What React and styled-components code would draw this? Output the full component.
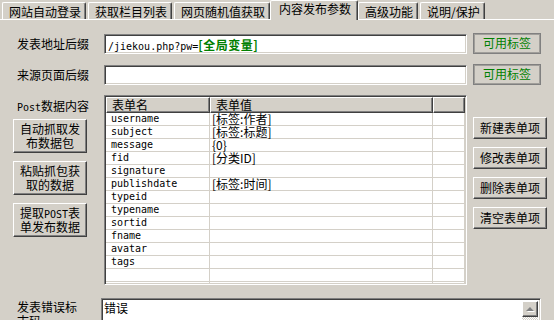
import React from "react";
import styled, { createGlobalStyle } from "styled-components";

const GlobalStyle = createGlobalStyle`
    html, body {
        margin: 0;
        padding: 0;
        background: #d4d0c8;
        overflow: hidden;
    }
    body {
        font-family: "Noto Sans CJK SC", "DejaVu Sans", sans-serif;
        font-size: 12px;
        color: #000;
    }
`;

const tabs = ["网站自动登录", "获取栏目列表", "网页随机值获取", "内容发布参数", "高级功能", "说明/保护"];

const fields = [
    ["username", "[标签:作者]"],
    ["subject", "[标签:标题]"],
    ["message", "{0}"],
    ["fid", "[分类ID]"],
    ["signature", ""],
    ["publishdate", "[标签:时间]"],
    ["typeid", ""],
    ["typename", ""],
    ["sortid", ""],
    ["fname", ""],
    ["avatar", ""],
    ["tags", ""],
    ["", ""],
    ["", ""],
];

export default function App() {
    return (
        <Window>
            <GlobalStyle />
            <TabBar>
                {tabs.map((t, i) => (
                    <Tab key={t} $active={i === 3}>
                        {t}
                    </Tab>
                ))}
            </TabBar>
            <Panel>
                <FieldRow>
                    <Label>发表地址后缀</Label>
                    <TextInput>
                        <Mono>/jiekou.php?pw=</Mono>
                        <Var>[全局变量]</Var>
                    </TextInput>
                    <TagButton>可用标签</TagButton>
                </FieldRow>
                <FieldRow>
                    <Label>来源页面后缀</Label>
                    <TextInput />
                    <TagButton>可用标签</TagButton>
                </FieldRow>

                <Section>
                    <LeftCol>
                        <SideLabel>
                            <Mono>Post</Mono>数据内容
                        </SideLabel>
                        <TallButton>
                            <Line>自动抓取发</Line>
                            <Line>布数据包</Line>
                        </TallButton>
                        <TallButton>
                            <Line>粘贴抓包获</Line>
                            <Line>取的数据</Line>
                        </TallButton>
                        <TallButton>
                            <Line>
                                提取<Mono>POST</Mono>表
                            </Line>
                            <Line>单发布数据</Line>
                        </TallButton>
                    </LeftCol>

                    <ListView>
                        <HeaderRow>
                            <HeaderCell>表单名</HeaderCell>
                            <HeaderCell>表单值</HeaderCell>
                            <HeaderCell />
                        </HeaderRow>
                        {fields.map(([name, value], i) => (
                            <Row key={i}>
                                <NameCell>{name}</NameCell>
                                <ValueCell>{value}</ValueCell>
                                <ValueCell />
                            </Row>
                        ))}
                    </ListView>

                    <RightCol>
                        <ActionButton>新建表单项</ActionButton>
                        <ActionButton>修改表单项</ActionButton>
                        <ActionButton>删除表单项</ActionButton>
                        <ActionButton>清空表单项</ActionButton>
                    </RightCol>
                </Section>

                <BottomRow>
                    <BottomLabel>
                        <Line>发表错误标</Line>
                        <Line>志码</Line>
                    </BottomLabel>
                    <TextBox>
                        <BoxText>错误</BoxText>
                        <ScrollBar>
                            <ArrowButton>
                                <Triangle />
                            </ArrowButton>
                            <Track />
                        </ScrollBar>
                    </TextBox>
                </BottomRow>
            </Panel>
        </Window>
    );
}

const Window = styled.div`
    width: 554px;
    height: 320px;
    overflow: hidden;
    background: #d4d0c8;
`;

const TabBar = styled.div`
    display: flex;
    align-items: flex-end;
    height: 19px;
    padding-left: 2px;
    position: relative;
    z-index: 1;
`;

const Tab = styled.div`
    box-sizing: border-box;
    height: ${(p) => (p.$active ? "20px" : "17px")};
    margin: ${(p) => (p.$active ? "0 0 -1px -2px" : "0 2px 0 0")};
    padding: ${(p) => (p.$active ? "1px 6px 0 8px" : "2px 4px 0 6px")};
    background: #d4d0c8;
    border-top: 1px solid #fff;
    border-left: 1px solid #fff;
    border-right: 1px solid #404040;
    border-radius: 2px 2px 0 0;
    box-shadow: inset -1px 0 #808080;
    line-height: 14px;
    white-space: nowrap;
`;

const Panel = styled.div`
    border-top: 1px solid #fff;
    padding: 13px 0 0 13px;
`;

const FieldRow = styled.div`
    display: flex;
    align-items: center;
    height: 21px;
    margin-bottom: 10px;
`;

const Label = styled.div`
    box-sizing: border-box;
    width: 91px;
    padding-left: 4px;
    line-height: 14px;
`;

const sunken = `
    box-sizing: border-box;
    background: #fff;
    border-style: solid;
    border-width: 1px;
    border-color: #808080 #fff #fff #808080;
    box-shadow: inset 1px 1px #404040, inset -1px -1px #d4d0c8;
`;

const raised = `
    box-sizing: border-box;
    background: #d4d0c8;
    border-style: solid;
    border-width: 1px;
    border-color: #fff #404040 #404040 #fff;
    box-shadow: inset -1px -1px #808080;
`;

const TextInput = styled.div`
    ${sunken}
    width: 363px;
    height: 20px;
    padding: 2px 3px;
    line-height: 15px;
    white-space: nowrap;
    overflow: hidden;
`;

const Mono = styled.span`
    font-family: "DejaVu Sans Mono", "Liberation Mono", monospace;
    font-size: 10px;
`;

const Var = styled.span`
    color: #008000;
    font-weight: bold;
    letter-spacing: 0.5px;
`;

const Line = styled.div`
    height: 14px;
    line-height: 14px;
    white-space: nowrap;
`;

const TagButton = styled.div`
    box-sizing: border-box;
    width: 68px;
    height: 21px;
    margin-left: 6px;
    border: 1px solid #808080;
    box-shadow: inset 0 0 0 1px #a09e9a;
    color: #008000;
    text-align: center;
    line-height: 18px;
`;

const Section = styled.div`
    display: flex;
    align-items: flex-start;
`;

const LeftCol = styled.div`
    display: flex;
    flex-direction: column;
    width: 91px;
    gap: 8px;
`;

const SideLabel = styled.div`
    padding: 4px 0 0 4px;
    line-height: 14px;
    margin-bottom: -4px;
    white-space: nowrap;
`;

const TallButton = styled.div`
    ${raised}
    display: flex;
    flex-direction: column;
    align-items: center;
    width: 74px;
    height: 34px;
    padding-top: 2px;
`;

const ListView = styled.div`
    ${sunken}
    width: 363px;
    height: 190px;
    overflow: hidden;
`;

const columns = `
    display: grid;
    grid-template-columns: 104px 223px 32px;
`;

const HeaderRow = styled.div`
    ${columns}
    height: 16px;
    margin: 1px 0 0 1px;
`;

const HeaderCell = styled.div`
    ${raised}
    padding-left: 5px;
    line-height: 14px;
`;

const Row = styled.div`
    ${columns}
    height: 13px;
    margin-left: 1px;
`;

const NameCell = styled.div`
    box-sizing: border-box;
    border-right: 1px solid #d4d0c8;
    border-bottom: 1px solid #d4d0c8;
    padding-left: 5px;
    font-family: "DejaVu Sans Mono", "Liberation Mono", monospace;
    font-size: 10px;
    line-height: 12px;
`;

const ValueCell = styled.div`
    box-sizing: border-box;
    border-right: 1px solid #d4d0c8;
    border-bottom: 1px solid #d4d0c8;
    padding-left: 2px;
    line-height: 12px;
    white-space: nowrap;
`;

const RightCol = styled.div`
    display: flex;
    flex-direction: column;
    gap: 8px;
    margin-left: 6px;
    padding-top: 22px;
`;

const ActionButton = styled.div`
    ${raised}
    width: 74px;
    height: 22px;
    text-align: center;
    line-height: 19px;
`;

const BottomRow = styled.div`
    display: flex;
    align-items: flex-start;
    margin-top: 13px;
`;

const BottomLabel = styled.div`
    box-sizing: border-box;
    width: 88px;
    padding: 2px 0 0 4px;
`;

const TextBox = styled.div`
    ${sunken}
    display: flex;
    justify-content: space-between;
    width: 440px;
    height: 60px;
    padding: 2px 2px 0 2px;
`;

const BoxText = styled.div`
    line-height: 14px;
`;

const ScrollBar = styled.div`
    display: flex;
    flex-direction: column;
    width: 16px;
`;

const ArrowButton = styled.div`
    ${raised}
    display: flex;
    align-items: center;
    justify-content: center;
    width: 16px;
    height: 16px;
`;

const Triangle = styled.div`
    width: 0;
    height: 0;
    border-left: 4px solid transparent;
    border-right: 4px solid transparent;
    border-bottom: 4px solid #808080;
    filter: drop-shadow(1px 1px 0 #fff);
`;

const Track = styled.div`
    flex: 1;
    background: repeating-conic-gradient(#d4d0c8 0 25%, #fff 0 50%) 0 0 / 2px 2px;
`;
